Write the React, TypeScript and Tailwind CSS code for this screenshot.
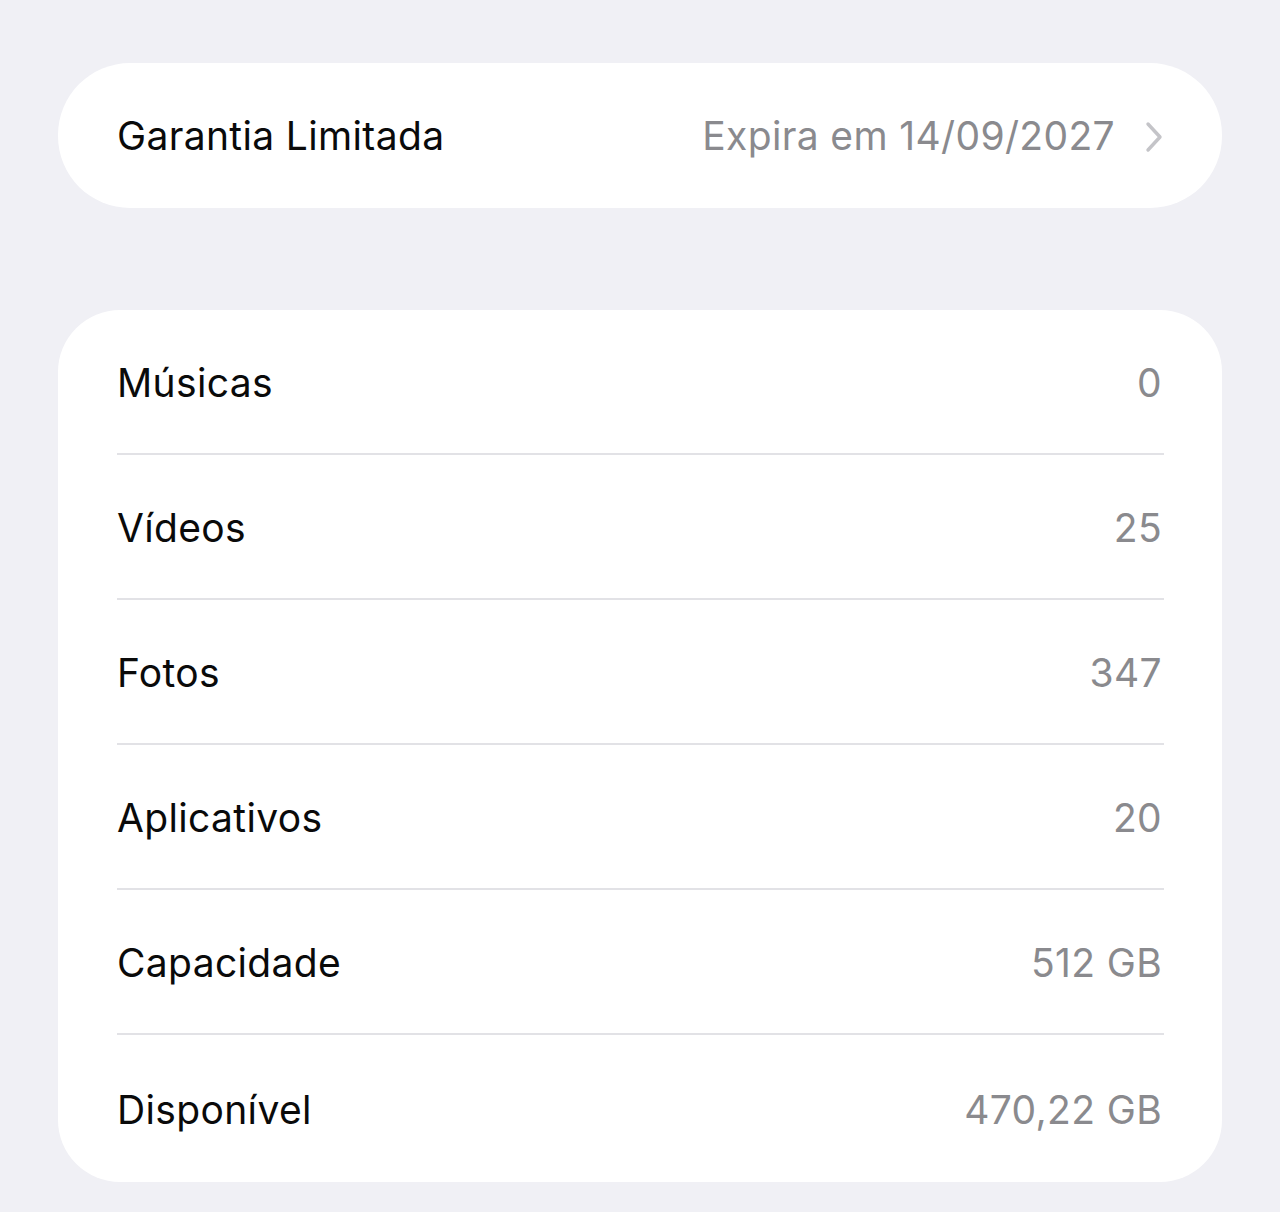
const rows = [
  { label: "Músicas", value: "0" },
  { label: "Vídeos", value: "25" },
  { label: "Fotos", value: "347" },
  { label: "Aplicativos", value: "20" },
  { label: "Capacidade", value: "512 GB" },
  { label: "Disponível", value: "470,22 GB" },
]

function Chevron() {
  return (
    <svg width="18" height="32" viewBox="0 0 18 32" fill="none" className="text-[#c4c4c8]">
      <polyline points="3,3 15,16 3,29" stroke="currentColor" strokeWidth="3.4" strokeLinecap="round" strokeLinejoin="round" />
    </svg>
  )
}

export default function App() {
  return (
    <div className="min-h-[1212px] w-full bg-[#f0f0f5] px-[58px] pt-[63px] font-['Inter',sans-serif] text-[39px] tracking-[0.35px]">
      <div className="flex h-[145px] items-center justify-between rounded-[72px] bg-white pl-[59px] pr-[59px] pt-[2px]">
        <span className="text-[#0a0a0a]">Garantia Limitada</span>
        <div className="flex items-center gap-[30px] text-[#8a8a8e]">
          <span>Expira em 14/09/2027</span>
          <Chevron />
        </div>
      </div>

      <div className="mt-[102px] flex flex-col rounded-[62px] bg-white pl-[59px] pr-[58px]">
        {rows.map((r, i) => (
          <div
            key={r.label}
            className={
              i < rows.length - 1
                ? "flex h-[145px] items-center justify-between border-b-2 border-[#e2e2e6] pt-[3px]"
                : "flex h-[147px] items-center justify-between pt-[3px]"
            }
          >
            <span className="text-[#0a0a0a]">{r.label}</span>
            <span className="pr-[2px] text-[#8a8a8e]">{r.value}</span>
          </div>
        ))}
      </div>
    </div>
  )
}
